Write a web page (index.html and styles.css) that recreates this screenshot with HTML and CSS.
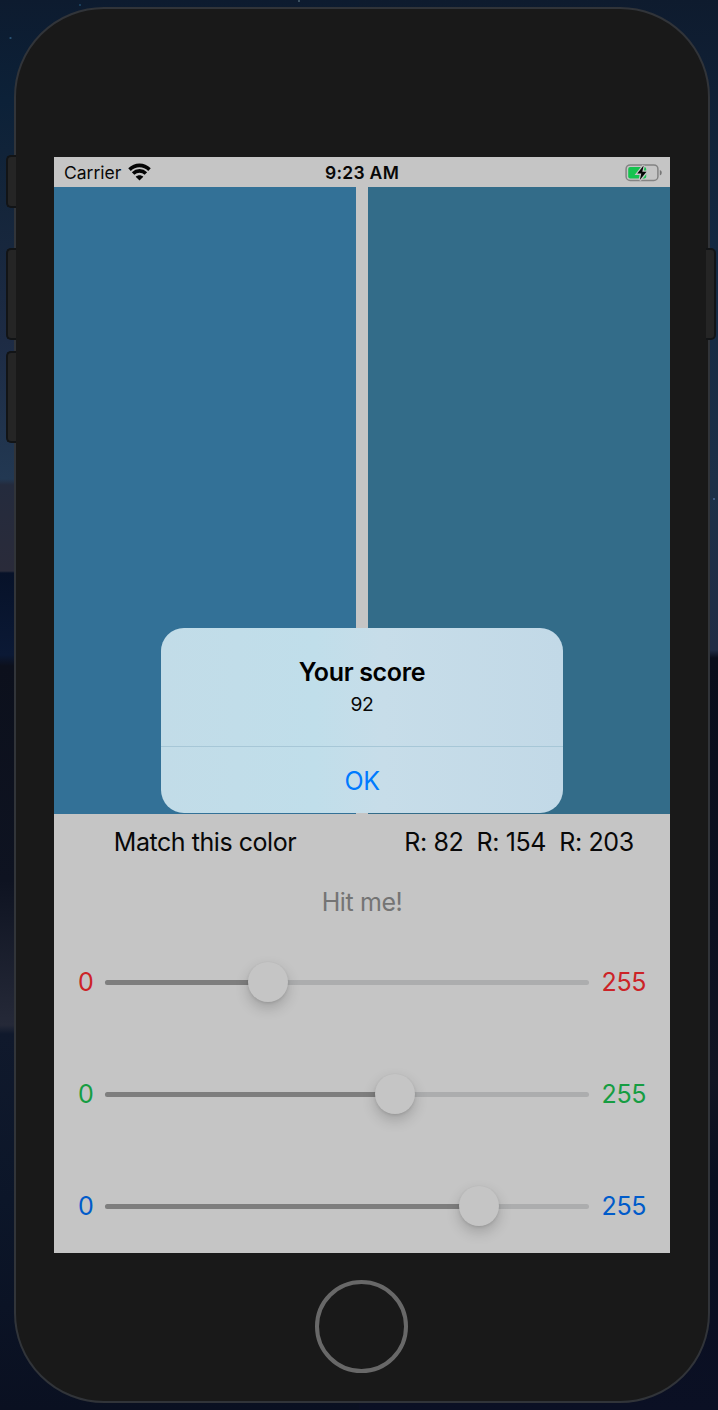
FILE: index.html
```html
<!DOCTYPE html>
<html lang="en">
<head>
<meta charset="utf-8">
<title>Match this color</title>
<link rel="stylesheet" href="styles.css">
</head>
<body>
<div class="desktop">
  <div class="phone">
    <i class="side-button mute"></i>
    <i class="side-button volume-up"></i>
    <i class="side-button volume-down"></i>
    <i class="side-button power"></i>
    <main class="screen">
      <header class="status-bar">
        <div class="carrier"><span class="carrier-name">Carrier</span>
          <svg class="wifi" width="24" height="18" viewBox="0 0 24 18" fill="none" stroke="#050505" stroke-width="3.6"><path d="M1.5 6.6C7.3.9 15.7.9 21.5 6.6"/><path d="M5.1 10.5c3.7-3.5 9.1-3.5 12.8 0"/><path d="M11.5 17.6 7.7 13.8c2.1-2 5.5-2 7.6 0Z" fill="#050505" stroke="none"/></svg>
        </div>
        <time class="time">9:23 AM</time>
        <svg class="battery" width="37" height="20" viewBox="0 0 37 20"><rect x="1.1" y="1.9" width="31.8" height="15.6" rx="4" fill="none" stroke="#838383" stroke-width="1.5"/><path d="M34.8 7c2.6.8 2.6 4.6 0 5.4Z" fill="#777"/><rect x="3.2" y="4" width="18" height="11.5" rx="2" fill="#16c34f"/><path d="M18.6 2.6 12.3 10.6h4l-1.5 6.5 6.7-8.3h-4.2Z" fill="#050505" stroke="#c5c5c5" stroke-width="2.6" paint-order="stroke"/></svg>
      </header>
      <section class="swatches"><div class="swatch target"></div><div class="swatch guess"></div></section>
      <section class="captions"><p><span class="match">Match this color</span></p><p><span class="values">R: 82&nbsp; R: 154&nbsp; R: 203</span></p></section>
      <button class="hit"><span>Hit me!</span></button>
      <section class="sliders">
        <div class="slider red"><span class="min">0</span><div class="track"><div class="fill" style="width:162.5px"></div><i class="thumb"></i></div><span class="max">255</span></div>
        <div class="slider green"><span class="min">0</span><div class="track"><div class="fill" style="width:289.5px"></div><i class="thumb"></i></div><span class="max">255</span></div>
        <div class="slider blue"><span class="min">0</span><div class="track"><div class="fill" style="width:374px"></div><i class="thumb"></i></div><span class="max">255</span></div>
      </section>
      <div class="alert">
        <div class="message"><h1><span>Your score</span></h1><p>92</p></div>
        <button class="ok">OK</button>
      </div>
    </main>
    <div class="home"></div>
  </div>
</div>
</body>
</html>
```

FILE: styles.css
```css
* { box-sizing: border-box; }
body { margin: 0; font-family: Inter, "Liberation Sans", sans-serif; color: #080808; }
p, h1 { margin: 0; }
button { border: 0; padding: 0; background: none; font: inherit; color: inherit; }
.desktop {
  width: 718px; height: 1410px; padding: 7px 8px 0 14px; overflow: hidden;
  background:
    radial-gradient(circle at 10.5px 38px, #285173 0 .7px, transparent 1.4px),
    radial-gradient(circle at 80px 5px, #1b4362 0 .6px, transparent 1.4px),
    radial-gradient(circle at 299px 1px, #496170 0 .5px, transparent 1.3px),
    radial-gradient(circle at 714px 499px, #405a80 0 .7px, transparent 1.5px),
    linear-gradient(#0e1b2e, #132841 240px, #1c3048 480px, #202c45 650px, #090d1b 658px, #0b1020 930px, #111522 1080px, #080e1f 1180px, #0b1024 1410px) right 0 top 0 / 359px 100% no-repeat,
    linear-gradient(#0d1b2f, #0c2138 100px, #14253a 200px, #1d2b44 340px, #223852 479px, #242b3d 485px, #2a2b3a 571px, #071229 573px, #0b1935 655px, #0c101c 666px, #0e1321 880px, #252938 1025px, #10192c 1034px, #0c1629 1200px, #0a1021 1410px);
}
.phone {
  position: relative; width: 696px; height: 1396px; padding: 148px 38px 0;
  display: flex; flex-direction: column; align-items: center;
  border: 2px solid #313439; border-radius: 90px; background: #191919;
}
.side-button { position: absolute; width: 10px; background: #252525; border: 2px solid #121416; border-right: 0; border-radius: 5px 0 0 5px; left: -10px; }
.mute { top: 146px; height: 53px; }
.volume-up { top: 239px; height: 92px; }
.volume-down { top: 342px; height: 92px; }
.power { top: 239px; height: 92px; left: auto; right: -8px; transform: scaleX(-1); }
.screen { position: relative; width: 616px; height: 1096px; flex: none; display: flex; flex-direction: column; background: #c5c5c5; }
.status-bar { height: 30px; flex: none; padding: 0 8px 0 10px; display: grid; grid-template-columns: 1fr auto 1fr; align-items: center; font-size: 17.5px; line-height: 30px; }
.carrier { display: flex; align-items: center; gap: 7px; }
.wifi { margin-top: -1px; }
.time { font-weight: 600; letter-spacing: .3px; margin-right: 2px; padding-top: 1px; }
.carrier-name { padding-top: 1px; }
.battery { justify-self: end; }
.swatches { height: 627px; flex: none; display: grid; grid-template-columns: 302px 302px; gap: 12px; }
.target { background: #337197; }
.guess { background: #336c89; }
.captions { height: 56px; flex: none; display: grid; grid-template-columns: 302px 302px; gap: 12px; text-align: center; font-size: 25px; line-height: 56px; letter-spacing: -.45px; }
.values { letter-spacing: -.4px; }
.hit { height: 64px; flex: none; color: #747474; font-size: 25px; line-height: 64px; letter-spacing: -.4px; }
.sliders { display: flex; flex-direction: column; gap: 76px; padding: 30px 24px 0 24px; }
.slider { height: 36px; display: grid; grid-template-columns: 27px 484px 1fr; align-items: center; font-size: 25px; letter-spacing: -.4px; line-height: 36px; }
.track { display: flex; align-items: center; height: 5px; margin-top: 1px; border-radius: 3px; background: #acadae; }
.fill { height: 5px; flex: none; border-radius: 3px; background: #7e7e7e; }
.thumb { width: 40px; height: 40px; flex: none; margin: -2px 0 0 -20px; border-radius: 50%; background: #c5c5c5; box-shadow: 0 6px 14px rgba(0,0,0,.19), 0 1px 3px rgba(0,0,0,.1); }
.max { text-align: right; }
.red { color: #cc2327; }
.green { color: #169d42; }
.blue { color: #005bca; }
.alert { position: absolute; left: 107px; top: 471px; width: 402px; height: 185px; border-radius: 23px; overflow: hidden; text-align: center; background: linear-gradient(90deg, #c2dce8, #c0deea 38%, #c7dde9 55%, #c2d9e7); }
.message { height: 119px; padding-top: 27px; border-bottom: 1px solid #a7c7d7; }
.message h1 { font-size: 25px; line-height: 34px; font-weight: 600; letter-spacing: -.35px; color: #000; }
.message p { font-size: 19.3px; line-height: 30px; letter-spacing: -.3px; }
.ok { width: 100%; height: 66px; color: #007aff; font-size: 25px; line-height: 68px; letter-spacing: -.5px; }
.home { width: 93px; height: 93px; flex: none; margin: 27px 0 0 -1px; border: 4.5px solid #686868; border-radius: 50%; }
```
